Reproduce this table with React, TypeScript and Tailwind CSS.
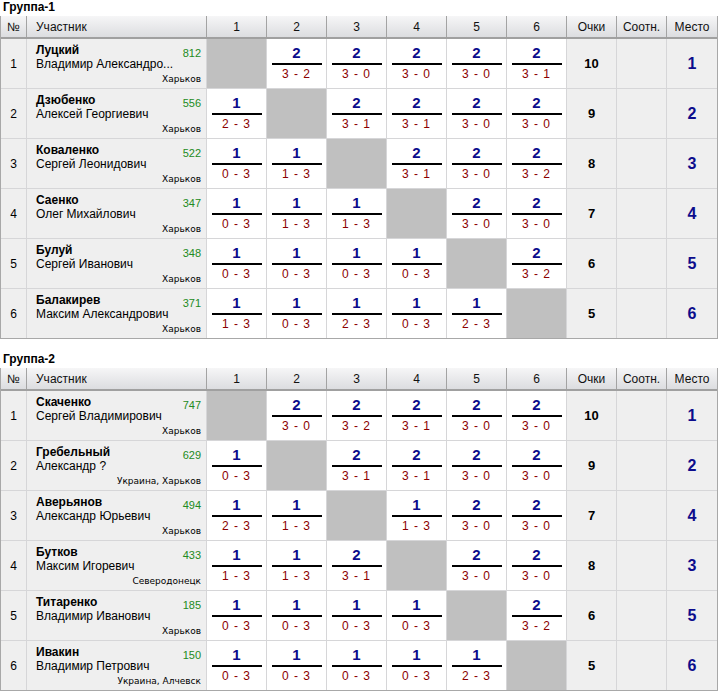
import React from "react";

type Res = null | [string, string];
type Player = {
  n: number;
  surname: string;
  name: string;
  rating: string;
  city: string;
  res: Res[];
  pts: string;
  place: string;
};

const g1: Player[] = [
  { n: 1, surname: "Луцкий", name: "Владимир Александро...", rating: "812", city: "Харьков", res: [null, ["2", "3 - 2"], ["2", "3 - 0"], ["2", "3 - 0"], ["2", "3 - 0"], ["2", "3 - 1"]], pts: "10", place: "1" },
  { n: 2, surname: "Дзюбенко", name: "Алексей Георгиевич", rating: "556", city: "Харьков", res: [["1", "2 - 3"], null, ["2", "3 - 1"], ["2", "3 - 1"], ["2", "3 - 0"], ["2", "3 - 0"]], pts: "9", place: "2" },
  { n: 3, surname: "Коваленко", name: "Сергей Леонидович", rating: "522", city: "Харьков", res: [["1", "0 - 3"], ["1", "1 - 3"], null, ["2", "3 - 1"], ["2", "3 - 0"], ["2", "3 - 2"]], pts: "8", place: "3" },
  { n: 4, surname: "Саенко", name: "Олег Михайлович", rating: "347", city: "Харьков", res: [["1", "0 - 3"], ["1", "1 - 3"], ["1", "1 - 3"], null, ["2", "3 - 0"], ["2", "3 - 0"]], pts: "7", place: "4" },
  { n: 5, surname: "Булуй", name: "Сергей Иванович", rating: "348", city: "Харьков", res: [["1", "0 - 3"], ["1", "0 - 3"], ["1", "0 - 3"], ["1", "0 - 3"], null, ["2", "3 - 2"]], pts: "6", place: "5" },
  { n: 6, surname: "Балакирев", name: "Максим Александрович", rating: "371", city: "Харьков", res: [["1", "1 - 3"], ["1", "0 - 3"], ["1", "2 - 3"], ["1", "0 - 3"], ["1", "2 - 3"], null], pts: "5", place: "6" },
];

const g2: Player[] = [
  { n: 1, surname: "Скаченко", name: "Сергей Владимирович", rating: "747", city: "Харьков", res: [null, ["2", "3 - 0"], ["2", "3 - 2"], ["2", "3 - 1"], ["2", "3 - 0"], ["2", "3 - 0"]], pts: "10", place: "1" },
  { n: 2, surname: "Гребельный", name: "Александр ?", rating: "629", city: "Украина, Харьков", res: [["1", "0 - 3"], null, ["2", "3 - 1"], ["2", "3 - 1"], ["2", "3 - 0"], ["2", "3 - 0"]], pts: "9", place: "2" },
  { n: 3, surname: "Аверьянов", name: "Александр Юрьевич", rating: "494", city: "Харьков", res: [["1", "2 - 3"], ["1", "1 - 3"], null, ["1", "1 - 3"], ["2", "3 - 0"], ["2", "3 - 0"]], pts: "7", place: "4" },
  { n: 4, surname: "Бутков", name: "Максим Игоревич", rating: "433", city: "Северодонецк", res: [["1", "1 - 3"], ["1", "1 - 3"], ["2", "3 - 1"], null, ["2", "3 - 0"], ["2", "3 - 0"]], pts: "8", place: "3" },
  { n: 5, surname: "Титаренко", name: "Владимир Иванович", rating: "185", city: "Харьков", res: [["1", "0 - 3"], ["1", "0 - 3"], ["1", "0 - 3"], ["1", "0 - 3"], null, ["2", "3 - 2"]], pts: "6", place: "5" },
  { n: 6, surname: "Ивакин", name: "Владимир Петрович", rating: "150", city: "Украина, Алчевск", res: [["1", "0 - 3"], ["1", "0 - 3"], ["1", "0 - 3"], ["1", "0 - 3"], ["1", "2 - 3"], null], pts: "5", place: "6" },
];

const cols = "grid grid-cols-[26px_180px_60px_60px_60px_60px_60px_60px_50px_50px_50px]";

function HeaderCell({ children, last }: { children: React.ReactNode; last?: boolean }) {
  return (
    <div
      className={
        "h-[21px] flex items-center justify-center text-[12px] text-[#111] bg-gradient-to-b from-[#f6f6f7] to-[#dcdde0] border-[#a3a3a3] " +
        (last ? "" : "border-r")
      }
    >
      {children}
    </div>
  );
}

function Group({ title, players }: { title: string; players: Player[] }) {
  return (
    <div>
      <div className="h-[16px] pl-[3px] text-[12px] font-bold leading-[14px] text-black">{title}</div>
      <div className="w-[718px] border-l border-r border-b border-[#a8a8a8]">
        <div className={cols + " border-b-2 border-[#a0a0a0]"}>
          <HeaderCell>№</HeaderCell>
          <div className="h-[21px] flex items-center pl-[9px] text-[12px] text-[#111] bg-gradient-to-b from-[#f6f6f7] to-[#dcdde0] border-r border-[#a3a3a3]">
            Участник
          </div>
          {["1", "2", "3", "4", "5", "6"].map((c) => (
            <HeaderCell key={c}>{c}</HeaderCell>
          ))}
          <HeaderCell>Очки</HeaderCell>
          <HeaderCell>Соотн.</HeaderCell>
          <HeaderCell last>Место</HeaderCell>
        </div>
        {players.map((p, i) => (
          <div key={p.n} className={cols + (i < players.length - 1 ? " border-b border-[#d6d6d8]" : "")}>
            <div className="h-[49px] bg-[#efefef] border-r border-[#d6d6d8] flex items-center justify-center text-[12px] text-black">
              {p.n}
            </div>
            <div className="h-[49px] bg-[#efefef] border-r border-[#d6d6d8] pl-[9px] pr-[5px] pt-[4px] relative">
              <div className="text-[12px] font-bold leading-[14px] text-black">{p.surname}</div>
              <div className="text-[12px] leading-[14px] text-black whitespace-nowrap">{p.name}</div>
              <div className="absolute right-[5px] top-[8px] text-[11px] leading-[12px] text-[#228b22]">{p.rating}</div>
              <div className="absolute right-[5px] top-[35px] text-[9px] leading-[11px] text-black font-['DejaVu_Sans',sans-serif]">
                {p.city}
              </div>
            </div>
            {p.res.map((r, j) =>
              r === null ? (
                <div key={j} className="h-[49px] bg-[#c0c0c0] border-r border-[#d6d6d8]" />
              ) : (
                <div key={j} className="h-[49px] bg-white border-r border-[#d6d6d8] flex flex-col items-center pt-[5px]">
                  <div className="text-[15px] font-bold leading-[17px] text-[#0c0c8c]">{r[0]}</div>
                  <div className="w-[50px] h-[2px] bg-black mt-[2px]" />
                  <div className="text-[12px] leading-[16px] mt-[1px] tracking-[1px] text-[#8b0000]">{r[1]}</div>
                </div>
              )
            )}
            <div className="h-[49px] bg-[#efefef] border-r border-[#d6d6d8] flex items-center justify-center text-[13px] font-bold text-black">
              {p.pts}
            </div>
            <div className="h-[49px] bg-[#efefef] border-r border-[#d6d6d8]" />
            <div className="h-[49px] bg-[#efefef] flex items-center justify-center text-[16px] font-bold text-[#0c0c8c]">
              {p.place}
            </div>
          </div>
        ))}
      </div>
    </div>
  );
}

export default function App() {
  return (
    <div className="w-[719px] h-[691px] bg-white overflow-hidden font-['Liberation_Sans',Arial,sans-serif]">
      <Group title="Группа-1" players={g1} />
      <div className="h-[13px]" />
      <Group title="Группа-2" players={g2} />
    </div>
  );
}
